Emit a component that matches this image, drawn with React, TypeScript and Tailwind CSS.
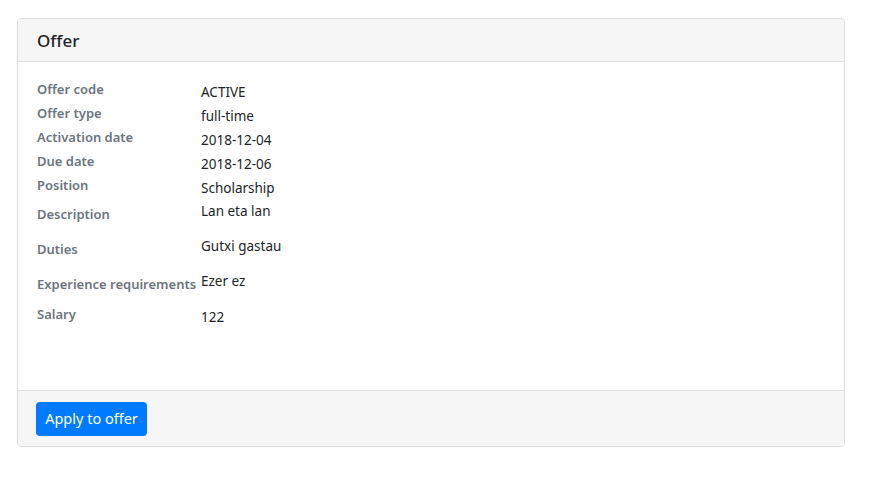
const rows: { label: string; value: string; h: string; lp: string; vp: string }[] = [
  { label: "Offer code", value: "ACTIVE", h: "h-[24px]", lp: "pt-0", vp: "pt-[3px]" },
  { label: "Offer type", value: "full-time", h: "h-[24px]", lp: "pt-0", vp: "pt-[3px]" },
  { label: "Activation date", value: "2018-12-04", h: "h-[24px]", lp: "pt-0", vp: "pt-[3px]" },
  { label: "Due date", value: "2018-12-06", h: "h-[24px]", lp: "pt-0", vp: "pt-[3px]" },
  { label: "Position", value: "Scholarship", h: "h-[24px]", lp: "pt-0", vp: "pt-[3px]" },
  { label: "Description", value: "Lan eta lan", h: "h-[35px]", lp: "pt-[5px]", vp: "pt-[2px]" },
  { label: "Duties", value: "Gutxi gastau", h: "h-[35px]", lp: "pt-[5px]", vp: "pt-[2px]" },
  { label: "Experience requirements", value: "Ezer ez", h: "h-[35px]", lp: "pt-[5px]", vp: "pt-[2px]" },
  { label: "Salary", value: "122", h: "h-[24px]", lp: "pt-0", vp: "pt-[3px]" },
];

export default function App() {
  return (
    <div
      className="min-h-[482px] w-[875px] bg-white pl-[17px] pt-[18px]"
      style={{ fontFamily: '"Noto Sans", "Open Sans", sans-serif' }}
    >
      <div className="w-[828px] overflow-hidden rounded-[4px] border border-[#dfdfdf]">
        {/* header */}
        <div className="flex h-[43px] items-center border-b border-[#dfdfdf] bg-[#f6f6f6] px-[19px]">
          <h5 className="text-[17px] font-medium leading-none text-[#212529]">Offer</h5>
        </div>

        {/* body */}
        <div className="h-[328px] px-[19px] pt-[17px] text-[13px] leading-[20px]">
          {rows.map((r) => (
            <div key={r.label} className={`flex ${r.h}`}>
              <div className={`w-[164px] shrink-0 whitespace-nowrap font-semibold text-[#6c757d] ${r.lp}`}>
                {r.label}
              </div>
              <div className={`text-[13.5px] text-[#212529] ${r.vp}`}>{r.value}</div>
            </div>
          ))}
        </div>

        {/* footer */}
        <div className="flex h-[56px] items-center border-t border-[#dfdfdf] bg-[#f6f6f6] px-[18px]">
          <button className="h-[34px] w-[111px] rounded-[4px] bg-[#007bff] text-[14.5px] text-white">
            Apply to offer
          </button>
        </div>
      </div>
    </div>
  );
}
